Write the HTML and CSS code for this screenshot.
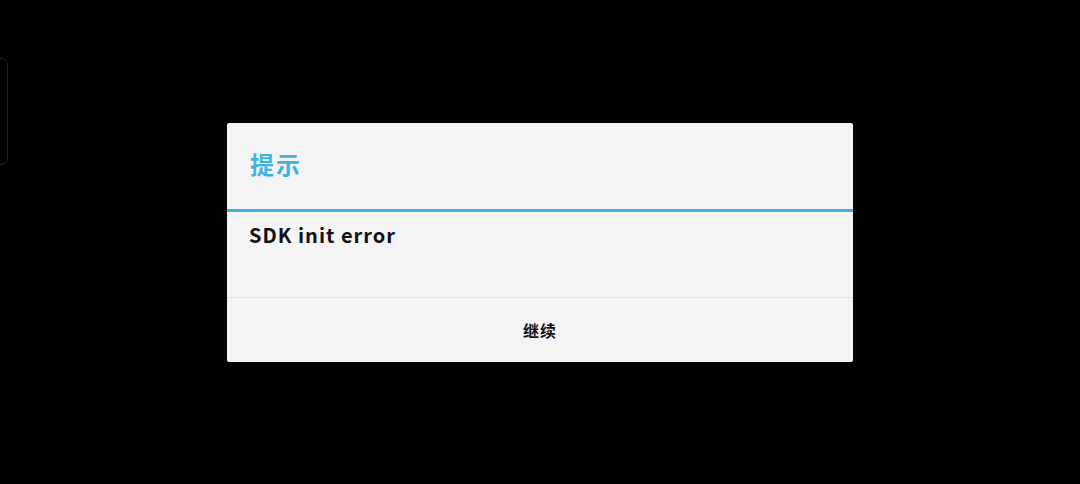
FILE: index.html
```html
<!DOCTYPE html>
<html>
<head>
<meta charset="utf-8">
<link rel="stylesheet" href="styles.css">
</head>
<body>
<div class="edge-tab"></div>
<div class="screen">
  <div class="dialog">
    <div class="title">提示</div>
    <div class="message">SDK init error</div>
    <div class="actions"><span class="btn">继续</span></div>
  </div>
</div>
</body>
</html>
```
FILE: styles.css
```css
html, body {
  margin: 0;
  padding: 0;
  background: #000;
  width: 1080px;
  height: 484px;
  overflow: hidden;
}
.edge-tab {
  position: absolute;
  left: -12px;
  top: 58px;
  width: 18px;
  height: 105px;
  border: 1px solid #1f2a1f;
  border-radius: 7px;
}
.screen {
  height: 484px;
  display: flex;
  align-items: center;
  justify-content: center;
}
.dialog {
  width: 626px;
  height: 239px;
  background: #f4f4f4;
  border-radius: 2px;
  display: flex;
  flex-direction: column;
  font-family: "Noto Sans CJK SC", "Noto Sans", sans-serif;
  font-weight: 700;
}
.title {
  height: 89px;
  box-sizing: border-box;
  border-bottom: 3px solid #3db3e3;
  padding: 0 0 4px 23px;
  display: flex;
  align-items: center;
  color: #3db3e3;
  font-size: 24px;
  letter-spacing: 2px;
}
.message {
  height: 86px;
  box-sizing: border-box;
  border-bottom: 1px solid #e2e2e2;
  padding: 8px 22px 0;
  font-size: 20px;
  color: #111;
  line-height: 30px;
  letter-spacing: 1px;
}
.actions {
  flex: 1;
  display: flex;
  align-items: center;
  justify-content: center;
}
.btn {
  font-size: 16px;
  color: #111;
  letter-spacing: 1px;
}
```
